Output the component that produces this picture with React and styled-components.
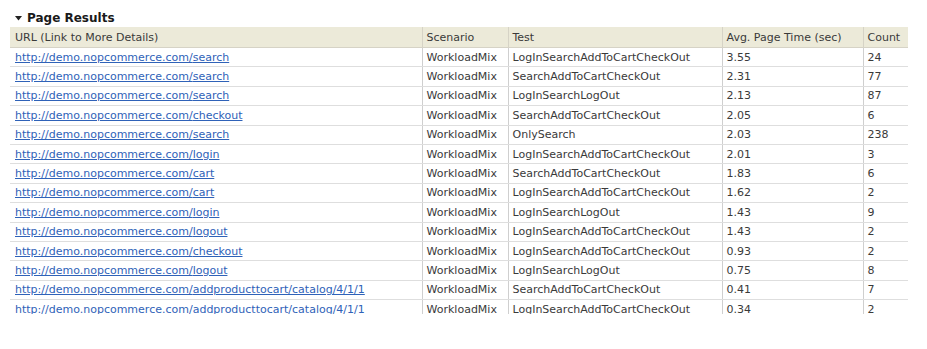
import React from "react";
import styled, { createGlobalStyle } from "styled-components";

const Global = createGlobalStyle`
  html, body { margin: 0; padding: 0; background: #ffffff; }
  body { font-family: "DejaVu Sans", Tahoma, sans-serif; }
`;

const Page = styled.div`
  width: 927px;
  height: 349px;
  padding: 10px 0 0 10px;
  box-sizing: border-box;
  background: #fff;
`;

const Title = styled.div`
  display: flex;
  align-items: center;
  gap: 5px;
  height: 16px;
  padding-left: 5px;
  font-family: "DejaVu Sans", Tahoma, sans-serif;
  font-weight: bold;
  font-size: 12px;
  color: #1a1a1a;
  margin-bottom: 1px;
`;

const Clip = styled.div`
  width: 898px;
  height: 287px;
  overflow: hidden;
`;

const Table = styled.table`
  width: 898px;
  table-layout: fixed;
  border-collapse: collapse;
  font-family: "DejaVu Sans", Tahoma, sans-serif;
  font-size: 11px;
  color: #3a3a3a;
`;

const Th = styled.th`
  background: #ecead9;
  font-weight: normal;
  text-align: left;
  height: 20px;
  padding: 0 4px;
  border-left: 1px solid #d6d3c6;
  border-bottom: 1px solid #d6d3c6;
  white-space: nowrap;
  overflow: hidden;
  &:first-child { border-left: none; padding-left: 5px; }
`;

const Td = styled.td`
  height: 18.4px;
  padding: 0 4px;
  border-left: 1px solid #cfcfcf;
  border-bottom: 1px solid #dedede;
  white-space: nowrap;
  overflow: hidden;
  &:first-child { border-left: none; padding-left: 5px; }
`;

const Link = styled.a`
  color: #2f62b8;
  text-decoration: underline;
`;

const rows = [
  ["search", "LogInSearchAddToCartCheckOut", "3.55", "24"],
  ["search", "SearchAddToCartCheckOut", "2.31", "77"],
  ["search", "LogInSearchLogOut", "2.13", "87"],
  ["checkout", "SearchAddToCartCheckOut", "2.05", "6"],
  ["search", "OnlySearch", "2.03", "238"],
  ["login", "LogInSearchAddToCartCheckOut", "2.01", "3"],
  ["cart", "SearchAddToCartCheckOut", "1.83", "6"],
  ["cart", "LogInSearchAddToCartCheckOut", "1.62", "2"],
  ["login", "LogInSearchLogOut", "1.43", "9"],
  ["logout", "LogInSearchAddToCartCheckOut", "1.43", "2"],
  ["checkout", "LogInSearchAddToCartCheckOut", "0.93", "2"],
  ["logout", "LogInSearchLogOut", "0.75", "8"],
  ["addproducttocart/catalog/4/1/1", "SearchAddToCartCheckOut", "0.41", "7"],
  ["addproducttocart/catalog/4/1/1", "LogInSearchAddToCartCheckOut", "0.34", "2"],
];

export default function App() {
  return (
    <Page>
      <Global />
      <Title>
        <svg width="7" height="5" viewBox="0 0 7 5">
          <path d="M0 0 L7 0 L3.5 4.5 Z" fill="#222" />
        </svg>
        Page Results
      </Title>
      <Clip>
        <Table>
          <colgroup>
            <col style={{ width: 412 }} />
            <col style={{ width: 86 }} />
            <col style={{ width: 214 }} />
            <col style={{ width: 141 }} />
            <col style={{ width: 45 }} />
          </colgroup>
          <thead>
            <tr>
              <Th>URL (Link to More Details)</Th>
              <Th>Scenario</Th>
              <Th>Test</Th>
              <Th>Avg. Page Time (sec)</Th>
              <Th>Count</Th>
            </tr>
          </thead>
          <tbody>
            {rows.map((r, i) => (
              <tr key={i}>
                <Td>
                  <Link href="#">http://demo.nopcommerce.com/{r[0]}</Link>
                </Td>
                <Td>WorkloadMix</Td>
                <Td>{r[1]}</Td>
                <Td>{r[2]}</Td>
                <Td>{r[3]}</Td>
              </tr>
            ))}
          </tbody>
        </Table>
      </Clip>
    </Page>
  );
}
